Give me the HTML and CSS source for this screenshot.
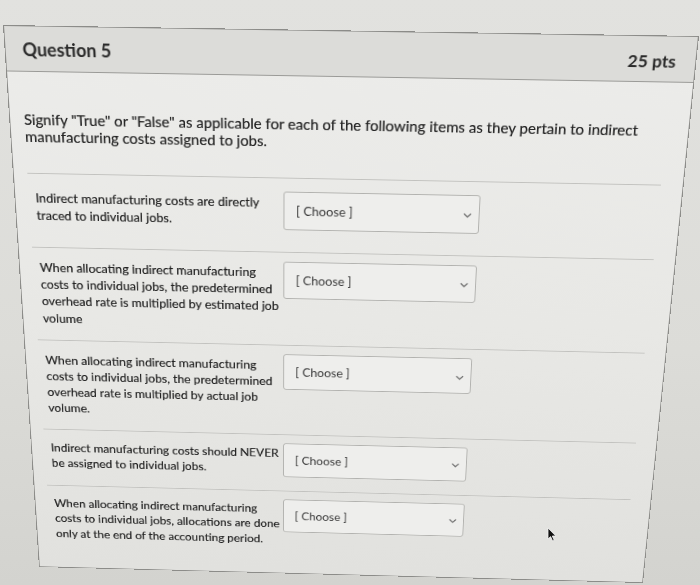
FILE: index.html
```html
<!DOCTYPE html>
<html lang="en">
<head>
<meta charset="utf-8">
<title>Question 5</title>
<link rel="stylesheet" href="styles.css">
</head>
<body>
<div class="screen">
  <div class="card">
    <div class="q-header">
      <span class="q-name">Question 5</span>
      <span class="q-pts">25 pts</span>
    </div>
    <div class="q-body">
      <p class="q-text">Signify "True" or "False" as applicable for each of the following items as they pertain to indirect manufacturing costs assigned to jobs.</p>
      <div class="answers">
        <div class="answer">
          <div class="label">Indirect manufacturing costs are directly traced to individual jobs.</div>
          <div class="select"><span>[ Choose ]</span><svg class="chev" viewBox="0 0 10 6"><path d="M1 1 L5 5 L9 1" /></svg></div>
        </div>
        <div class="answer">
          <div class="label">When allocating indirect manufacturing costs to individual jobs, the predetermined overhead rate is multiplied by estimated job volume</div>
          <div class="select"><span>[ Choose ]</span><svg class="chev" viewBox="0 0 10 6"><path d="M1 1 L5 5 L9 1" /></svg></div>
        </div>
        <div class="answer">
          <div class="label">When allocating indirect manufacturing costs to individual jobs, the predetermined overhead rate is multiplied by actual job volume.</div>
          <div class="select"><span>[ Choose ]</span><svg class="chev" viewBox="0 0 10 6"><path d="M1 1 L5 5 L9 1" /></svg></div>
        </div>
        <div class="answer">
          <div class="label">Indirect manufacturing costs should NEVER be assigned to individual jobs.</div>
          <div class="select"><span>[ Choose ]</span><svg class="chev" viewBox="0 0 10 6"><path d="M1 1 L5 5 L9 1" /></svg></div>
        </div>
        <div class="answer">
          <div class="label">When allocating indirect manufacturing costs to individual jobs, allocations are done only at the end of the accounting period.</div>
          <div class="select"><span>[ Choose ]</span><svg class="chev" viewBox="0 0 10 6"><path d="M1 1 L5 5 L9 1" /></svg></div>
        </div>
      </div>
    </div>
  </div>
  <svg class="cursor" viewBox="0 0 10 15"><path d="M1 1 L1 12 L3.6 9.6 L5.6 14 L7.2 13.3 L5.3 9 L8.8 9 Z" /></svg>
</div>
</body>
</html>
```

FILE: styles.css
```css
html, body {
  margin: 0;
  padding: 0;
  overflow: hidden;
}

body {
  width: 700px;
  height: 585px;
  font-family: Lato, "Open Sans", "Liberation Sans", sans-serif;
}

.screen {
  position: relative;
  width: 700px;
  height: 585px;
  overflow: hidden;
  background: linear-gradient(180deg, #e2e2df 0%, #dcdcd8 60%, #d3d3cf 100%);
}

.card {
  width: 686px;
  height: 624px;
  box-sizing: border-box;
  overflow: hidden;
  border: 1px solid #8c8c89;
  background: linear-gradient(180deg, #ececea 0%, #e8e8e5 50%, #e1e1de 100%);
  transform-origin: 0 0;
  transform: matrix3d(1.000758, 0.015324, 0, -0.000019765, 0.067131, 1.005849, 0, 0.00024209, 0, 0, 1, 0, 3, 25, 0, 1);
}

.q-header {
  height: 46px;
  box-sizing: border-box;
  border-bottom: 1px solid #9a9a97;
  background: #dcdcd9;
  display: flex;
  align-items: center;
  justify-content: space-between;
  padding: 0 19px 0 17px;
  color: #2a2a2a;
  font-weight: 700;
  font-size: 18px;
}

.q-pts {
  font-size: 17px;
  margin-top: 4px;
}

.q-body {
  padding: 0 22px 0 14px;
}

.q-text {
  margin: 40px 0 0;
  font-size: 15.1px;
  line-height: 18px;
  color: #222222;
  text-shadow: 0 0 0.5px rgba(0, 0, 0, 0.45);
}

.answers {
  margin-top: 29.5px;
  border-top: 1px solid #c2c2bf;
}

.answer {
  display: flex;
  align-items: flex-start;
  border-top: 1px solid #c2c2bf;
  padding: 10px 0 0 7px;
}

.answer:first-child {
  border-top: none;
  padding-top: 14px;
  padding-bottom: 7px;
}

.label {
  width: 257px;
  padding: 3.4px 0 15.3px;
  font-size: 13.2px;
  line-height: 19.2px;
  color: #222222;
  text-shadow: 0 0 0.5px rgba(0, 0, 0, 0.45);
}

.select {
  margin: 0 0 17.2px;
  width: 202px;
  height: 42px;
  box-sizing: border-box;
  border: 1px solid #b2b2af;
  border-radius: 3px;
  background: #eeeeec;
  display: flex;
  align-items: center;
  justify-content: space-between;
  padding: 0 7px 0 12px;
  font-size: 13.2px;
  color: #3a3a3a;
}

.chev {
  width: 9px;
  height: 6px;
  margin-top: 3px;
  fill: none;
  stroke: #6f6f6f;
  stroke-width: 1.4;
}

.cursor {
  position: absolute;
  left: 547px;
  top: 527px;
  width: 10px;
  height: 15px;
  fill: #111111;
  stroke: #f4f4f4;
  stroke-width: 0.8;
}
```
